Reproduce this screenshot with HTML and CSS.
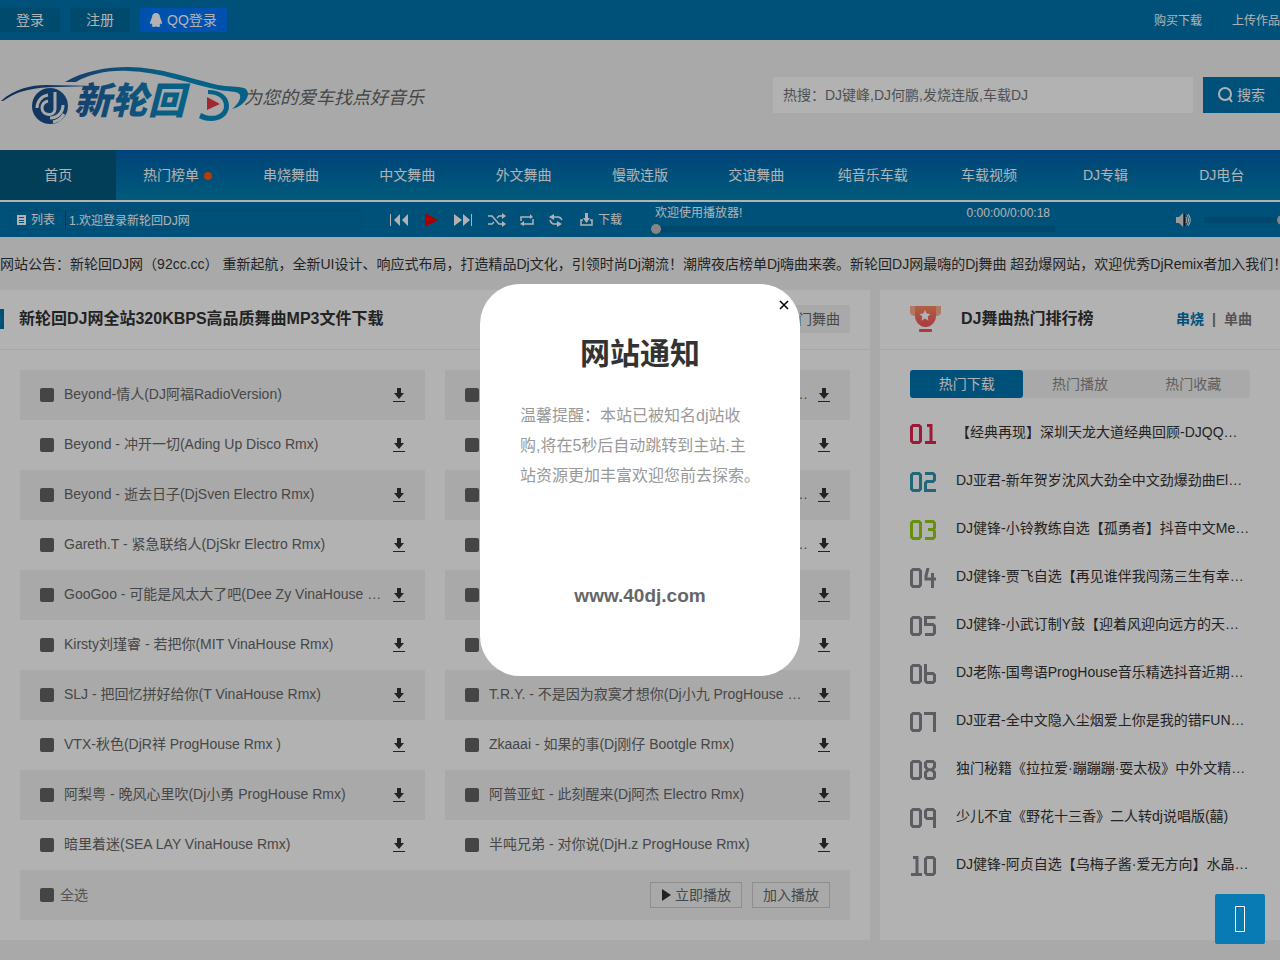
FILE: index.html
```html
<!DOCTYPE html>
<html lang="zh-CN">
<head>
<meta charset="utf-8">
<meta name="viewport" content="width=device-width, initial-scale=1">
<title>新轮回DJ网</title>
<link rel="stylesheet" href="styles.css">
</head>
<body>
<svg class="sprite" aria-hidden="true">
  <symbol id="d0" viewBox="0 0 12 20"><path d="M3 1.500h6L10.500 3v14L9 18.500H3L1.500 17V3z"/></symbol>
  <symbol id="d1" viewBox="0 0 12 20"><path d="M3 1.500h4v17M1 18.500h11"/></symbol>
  <symbol id="d2" viewBox="0 0 12 20"><path d="M1 1.500h8L10.500 3v5L9 9.500H3L1.500 11v7.500H12"/></symbol>
  <symbol id="d3" viewBox="0 0 12 20"><path d="M1 1.500h8L10.500 3v5L9 9.500H4M9 9.500l1.500 2V17L9 18.500H1"/></symbol>
  <symbol id="d4" viewBox="0 0 12 20"><path d="M4 0L2 8v3h10M8.500 5v15"/></symbol>
  <symbol id="d5" viewBox="0 0 12 20"><path d="M11.500 1.500h-10v7H9l1.500 1.500v7L9 18.500H1"/></symbol>
  <symbol id="d6" viewBox="0 0 12 20"><path d="M1.500 0v17L3 18.500h6l1.500-1.500v-6L9 9.500H2"/></symbol>
  <symbol id="d7" viewBox="0 0 12 20"><path d="M0 1.500h10.500V20"/></symbol>
  <symbol id="d8" viewBox="0 0 12 20"><path d="M3 1.500h6L10.500 3v4L8 9.700l2.500 2.800V17L9 18.500H3L1.500 17v-4.500L4 9.700 1.500 7V3zM4 9.700h4"/></symbol>
  <symbol id="d9" viewBox="0 0 12 20"><path d="M10.500 20V3L9 1.500H3L1.500 3v6L3 10.500h7"/></symbol>
  <symbol id="down" viewBox="0 0 12 14"><path d="M4 0h4v5h3L6 11 1 5h3zM0 13h12v1H0z"/></symbol>
</svg>

<div class="topbar">
  <div class="account">
    <button class="top-btn">登录</button>
    <button class="top-btn">注册</button>
    <button class="top-btn qq"><svg width="12" height="14" viewBox="0 0 12 14"><path fill="#fff" d="M6 0C3.500 0 2 1.800 2 4.300L.4 8.200C-.1 9.800 0 11 .4 11.200c.4 0 .8-.5 1.200-1 .1.800.5 1.400 1 1.900-.6.300-.9.700-.9 1 0 .700 1.200.9 2.300.8.800-.1 1.500-.3 2-.6.500.3 1.200.5 2 .6 1.100.1 2.300-.1 2.300-.8 0-.3-.3-.7-.9-1 .5-.5.900-1.100 1-1.900.4.500.8 1 1.200 1 .4-.2.500-1.400 0-3L10 4.300C10 1.800 8.500 0 6 0z"/></svg>QQ登录</button>
  </div>
  <div class="top-links"><a href="#">购买下载</a><a href="#">上传作品</a></div>
</div>

<header class="header">
  <a class="brand" href="#" aria-label="新轮回">
    <svg width="250" height="60" viewBox="0 0 250 60">
      <defs><linearGradient id="brandFill" gradientUnits="userSpaceOnUse" x1="0" y1="0" x2="250" y2="0"><stop offset="0" stop-color="#173f77"/><stop offset=".35" stop-color="#1f62a0"/><stop offset=".7" stop-color="#0a8cc0"/><stop offset="1" stop-color="#0a8cc0"/></linearGradient></defs>
      <g fill="url(#brandFill)">
        <path d="M65 17C83 6 107 2 128 2c32 0 64 12 90 18 10 2 20 1 26 3 9 4 2 18-12 21 6-5 9-10 8-14-2-4-8-3-21-5C190 19 160 7 128 6 106 5 88 10 76 17z"/>
        <path d="M1 36C14 24 31 20 46 20l54 1C70 22 44 21 28 25 17 27 9 32 3 36z"/>
        <circle cx="50" cy="41" r="18"/>
        <path d="M208 25c14 0 21 7 21 16 0 10-9 15-18 15-5 0-9-1-12-3l2-5c11 6 23 2 23-7 0-8-7-12-16-12z"/>
        <text class="brand-name" x="74" y="49">新轮回</text>
      </g>
      <g fill="none" stroke="#f3f3f3" stroke-width="3"><path d="M55 27v17c0 8-13 7-13-1 0-4 2-6 6-7M48 30c-7 1-11 7-11 13M50 53c8 0 13-6 13-13M53 57c5-1 9-4 11-8"/></g>
      <path d="M207 32l13 7-13 6z" fill="#e63a45"/>
    </svg>
    <span class="slogan">为您的爱车找点好音乐</span>
  </a>
  <form class="search">
    <input type="text" aria-label="搜索舞曲" placeholder="热搜：DJ键峰,DJ何鹏,发烧连版,车载DJ">
    <button type="button"><svg width="15" height="16" viewBox="0 0 15 16" fill="none" stroke="#fff" stroke-width="2"><circle cx="7" cy="7" r="6"/><path d="M11 11l3 4"/></svg>搜索</button>
  </form>
</header>

<nav class="nav">
  <a class="active" href="#">首页</a><a href="#">热门榜单<i class="dot"></i></a><a href="#">串烧舞曲</a><a href="#">中文舞曲</a><a href="#">外文舞曲</a><a href="#">慢歌连版</a><a href="#">交谊舞曲</a><a href="#">纯音乐车载</a><a href="#">车载视频</a><a href="#">DJ专辑</a><a href="#">DJ电台</a>
</nav>

<section class="player">
  <div class="playlist">
    <button><svg width="9" height="10" viewBox="0 0 9 10"><path fill="#fff" d="M0 0h9v10H0z"/><path d="M2 2.500h5M2 5.500h5M2 7.500h5" stroke="#0075ae"/></svg>列表</button>
    <span>1.欢迎登录新轮回DJ网</span>
  </div>
  <div class="controls">
    <button aria-label="上一首"><svg width="18" height="12" viewBox="0 0 18 12"><path d="M0 0h1v12H0zM10 0v12L4 6zM18 0v12l-6-6z"/></svg></button>
    <button aria-label="播放"><svg width="14" height="14" viewBox="0 0 14 14"><path d="M1 0l13 7-13 7z" fill="#f00000"/></svg></button>
    <button aria-label="下一首"><svg width="18" height="12" viewBox="0 0 18 12"><path d="M17 0h1v12h-1zM8 6l-8 6V0zM16 6l-7 6V0z"/></svg></button>
    <div class="modes">
      <button aria-label="随机播放"><svg width="18" height="14" viewBox="0 0 18 14"><path class="line" d="M0 3h4l7 8h4M0 11h4l2-2M9 5l2-2h4"/><path d="M14 0l4 3-4 3zM14 8l4 3-4 3z"/></svg></button>
      <button aria-label="列表循环"><svg width="14" height="12" viewBox="0 0 14 12"><path class="line" d="M1 7V3h10M13 5v5H3"/><path d="M10 0l3 3-3 2zM4 7l-4 3 4 2z"/></svg></button>
      <button aria-label="单曲循环"><svg width="16" height="14" viewBox="0 0 16 14"><path class="line" d="M3 4h7c2 0 3 1 4 3M2 7c1 3 2 4 4 4h6"/><path d="M6 1L1 4l5 3zM9 8l5 3-5 3z"/></svg></button>
    </div>
    <button class="download"><svg width="13" height="13" viewBox="0 0 13 13"><path class="line" d="M3 7H1v5h11V7h-2"/><path d="M5 0h3v5h2l-3.500 5L3 5h2z"/></svg>下载</button>
  </div>
  <div class="progress">
    <div class="progress-text"><span>欢迎使用播放器!</span><span>0:00:00/0:00:18</span></div>
    <input type="range" aria-label="播放进度" min="0" max="100" value="0">
  </div>
  <div class="volume">
    <svg width="15" height="14" viewBox="0 0 15 14"><path fill="#ddd" d="M0 4h3l4-4v14l-4-4H0z"/><path stroke="#222" d="M8.500 1v12"/><path class="line thin" d="M10 4c1 2 1 4 0 6M11 2c2 3 2 7 0 10M12 1c3 4 3 8 0 12"/></svg>
    <input type="range" aria-label="音量" min="0" max="100" value="100">
  </div>
</section>

<p class="notice">网站公告：新轮回DJ网（92cc.cc） 重新起航，全新UI设计、响应式布局，打造精品Dj文化，引领时尚Dj潮流！潮牌夜店榜单Dj嗨曲来袭。新轮回DJ网最嗨的Dj舞曲 超劲爆网站，欢迎优秀DjRemix者加入我们！</p>

<main class="main">
  <section class="card">
    <div class="card-head songs-head"><h2>新轮回DJ网全站320KBPS高品质舞曲MP3文件下载</h2><a class="tag" href="#">热门舞曲</a></div>
    <div class="card-body">
      <ul class="songs">
        <li><label><input type="checkbox"><span>Beyond-情人(DJ阿福RadioVersion)</span></label><button class="get" aria-label="下载"><svg><use href="#down"/></svg></button></li>
        <li><label><input type="checkbox"><span class="tail">…</span></label><button class="get" aria-label="下载"><svg><use href="#down"/></svg></button></li>
        <li><label><input type="checkbox"><span>Beyond - 冲开一切(Ading Up Disco Rmx)</span></label><button class="get" aria-label="下载"><svg><use href="#down"/></svg></button></li>
        <li><label><input type="checkbox"></label><button class="get" aria-label="下载"><svg><use href="#down"/></svg></button></li>
        <li><label><input type="checkbox"><span>Beyond - 逝去日子(DjSven Electro Rmx)</span></label><button class="get" aria-label="下载"><svg><use href="#down"/></svg></button></li>
        <li><label><input type="checkbox"><span class="tail">…</span></label><button class="get" aria-label="下载"><svg><use href="#down"/></svg></button></li>
        <li><label><input type="checkbox"><span>Gareth.T - 紧急联络人(DjSkr Electro Rmx)</span></label><button class="get" aria-label="下载"><svg><use href="#down"/></svg></button></li>
        <li><label><input type="checkbox"><span class="tail">…</span></label><button class="get" aria-label="下载"><svg><use href="#down"/></svg></button></li>
        <li><label><input type="checkbox"><span>GooGoo - 可能是风太大了吧(Dee Zy VinaHouse …</span></label><button class="get" aria-label="下载"><svg><use href="#down"/></svg></button></li>
        <li><label><input type="checkbox"></label><button class="get" aria-label="下载"><svg><use href="#down"/></svg></button></li>
        <li><label><input type="checkbox"><span>Kirsty刘瑾睿 - 若把你(MIT VinaHouse Rmx)</span></label><button class="get" aria-label="下载"><svg><use href="#down"/></svg></button></li>
        <li><label><input type="checkbox"></label><button class="get" aria-label="下载"><svg><use href="#down"/></svg></button></li>
        <li><label><input type="checkbox"><span>SLJ - 把回忆拼好给你(T VinaHouse Rmx)</span></label><button class="get" aria-label="下载"><svg><use href="#down"/></svg></button></li>
        <li><label><input type="checkbox"><span>T.R.Y. - 不是因为寂寞才想你(Dj小九 ProgHouse …</span></label><button class="get" aria-label="下载"><svg><use href="#down"/></svg></button></li>
        <li><label><input type="checkbox"><span>VTX-秋色(DjR祥 ProgHouse Rmx )</span></label><button class="get" aria-label="下载"><svg><use href="#down"/></svg></button></li>
        <li><label><input type="checkbox"><span>Zkaaai - 如果的事(Dj刚仔 Bootgle Rmx)</span></label><button class="get" aria-label="下载"><svg><use href="#down"/></svg></button></li>
        <li><label><input type="checkbox"><span>阿梨粤 - 晚风心里吹(Dj小勇 ProgHouse Rmx)</span></label><button class="get" aria-label="下载"><svg><use href="#down"/></svg></button></li>
        <li><label><input type="checkbox"><span>阿普亚虹 - 此刻醒来(Dj阿杰 Electro Rmx)</span></label><button class="get" aria-label="下载"><svg><use href="#down"/></svg></button></li>
        <li><label><input type="checkbox"><span>暗里着迷(SEA LAY VinaHouse Rmx)</span></label><button class="get" aria-label="下载"><svg><use href="#down"/></svg></button></li>
        <li><label><input type="checkbox"><span>半吨兄弟 - 对你说(DjH.z ProgHouse Rmx)</span></label><button class="get" aria-label="下载"><svg><use href="#down"/></svg></button></li>
      </ul>
      <div class="batch">
        <label><input type="checkbox"><span>全选</span></label>
        <div class="batch-actions"><button><svg width="10" height="12" viewBox="0 0 10 12"><path d="M1 0l9 6-9 6z" fill="#333"/></svg>立即播放</button><button>加入播放</button></div>
      </div>
    </div>
  </section>

  <section class="card chart">
    <div class="card-head">
      <svg width="31" height="27" viewBox="0 0 31 27">
        <defs><linearGradient id="cup" x1="0" y1="0" x2="0" y2="1"><stop offset="0" stop-color="#ff8a62"/><stop offset="1" stop-color="#f4525f"/></linearGradient></defs>
        <path d="M0 0h31v6c0 3-3 4-5 4H5C3 10 0 9 0 6z" fill="#ffad8c"/><path d="M5 0h21v10c0 6-5 11-10.500 11S5 16 5 10z" fill="url(#cup)"/><rect x="9" y="23" width="13" height="3" rx="1" fill="#f4525f"/>
        <path d="M15 4l1.700 3.400 3.800.6-2.800 2.600.7 3.800L15 12.600l-3.400 1.800.7-3.800L9.500 8l3.800-.6z" fill="#fff"/>
      </svg>
      <h2>DJ舞曲热门排行榜</h2>
      <div class="switch"><a class="on" href="#">串烧</a><span>|</span><a href="#">单曲</a></div>
    </div>
    <div class="card-body">
      <div class="tabs"><button class="on">热门下载</button><button>热门播放</button><button>热门收藏</button></div>
      <ol class="ranks">
        <li><span class="num red" role="img" aria-label="01"><svg><use href="#d0"/></svg><svg><use href="#d1"/></svg></span><a href="#">【经典再现】深圳天龙大道经典回顾-DJQQ…</a></li>
        <li><span class="num teal" role="img" aria-label="02"><svg><use href="#d0"/></svg><svg><use href="#d2"/></svg></span><a href="#">DJ亚君-新年贺岁沈风大劲全中文劲爆劲曲El…</a></li>
        <li><span class="num green" role="img" aria-label="03"><svg><use href="#d0"/></svg><svg><use href="#d3"/></svg></span><a href="#">DJ健锋-小铃教练自选【孤勇者】抖音中文Me…</a></li>
        <li><span class="num" role="img" aria-label="04"><svg><use href="#d0"/></svg><svg><use href="#d4"/></svg></span><a href="#">DJ健锋-贾飞自选【再见谁伴我闯荡三生有幸…</a></li>
        <li><span class="num" role="img" aria-label="05"><svg><use href="#d0"/></svg><svg><use href="#d5"/></svg></span><a href="#">DJ健锋-小武订制Y鼓【迎着风迎向远方的天…</a></li>
        <li><span class="num" role="img" aria-label="06"><svg><use href="#d0"/></svg><svg><use href="#d6"/></svg></span><a href="#">DJ老陈-国粤语ProgHouse音乐精选抖音近期…</a></li>
        <li><span class="num" role="img" aria-label="07"><svg><use href="#d0"/></svg><svg><use href="#d7"/></svg></span><a href="#">DJ亚君-全中文隐入尘烟爱上你是我的错FUN…</a></li>
        <li><span class="num" role="img" aria-label="08"><svg><use href="#d0"/></svg><svg><use href="#d8"/></svg></span><a href="#">独门秘籍《拉拉爱·蹦蹦蹦·耍太极》中外文精…</a></li>
        <li><span class="num" role="img" aria-label="09"><svg><use href="#d0"/></svg><svg><use href="#d9"/></svg></span><a href="#">少儿不宜《野花十三香》二人转dj说唱版(囍)</a></li>
        <li><span class="num" role="img" aria-label="10"><svg><use href="#d1"/></svg><svg><use href="#d0"/></svg></span><a href="#">DJ健锋-阿贞自选【乌梅子酱·爱无方向】水晶…</a></li>
      </ol>
    </div>
  </section>
</main>

<div class="mask">
  <div class="dialog" role="dialog" aria-labelledby="dialog-title">
    <button class="close" aria-label="关闭"><svg width="10" height="10" viewBox="0 0 10 10"><path d="M1 1l8 8M9 1L1 9" stroke="#000" stroke-width="1.500"/></svg></button>
    <h1 id="dialog-title">网站通知</h1>
    <p>温馨提醒：本站已被知名dj站收购,将在5秒后自动跳转到主站.主站资源更加丰富欢迎您前去探索。</p>
    <a href="#">www.40dj.com</a>
  </div>
</div>
<button class="to-top" aria-label="返回顶部"><svg width="12" height="28" viewBox="0 0 12 28"><path d="M1.500 1.500h9v25h-9z" fill="none" stroke="#fff"/></svg></button>
</body>
</html>
```
FILE: styles.css
```css
* { box-sizing: border-box; }
body { margin: 0; background: #f3f3f3; color: #333; font: 14px/20px "Liberation Sans", "Noto Sans CJK SC", sans-serif; overflow-x: hidden; }
a { color: inherit; text-decoration: none; }
button { margin: 0; padding: 0; border: 0; background: none; color: inherit; font: inherit; cursor: pointer; }
h1, h2, p, ul, ol { margin: 0; padding: 0; }
ul, ol { list-style: none; }
svg { flex: none; display: block; }
.sprite { position: absolute; width: 0; height: 0; }

.topbar { display: flex; align-items: center; justify-content: space-between; height: 40px; background: #0075ae; color: #fff; }
.account { display: flex; gap: 10px; }
.top-btn { display: flex; align-items: center; gap: 5px; height: 24px; padding: 0 16px; background: #006b9d; }
.top-btn.qq { padding: 0 10px; background: #0075fa; }
.top-links { display: flex; padding-top: 2px; font-size: 12px; }
.top-links a + a { margin-left: 15px; padding-left: 14px; border-left: 1px solid #006fa5; }

.header { display: flex; align-items: center; justify-content: space-between; height: 110px; }
.brand { display: flex; align-items: center; }
.brand svg { overflow: visible; margin-right: -6px; }
.brand-name { font: italic 900 37px "Noto Sans CJK SC", sans-serif; }
.slogan { padding-top: 2px; color: #666; font: italic 18px/30px "Noto Sans CJK SC", sans-serif; }
.search { display: flex; gap: 10px; }
.search input { width: 420px; height: 36px; padding: 0 10px; border: 0; background: #fff; font: inherit; }
.search input::placeholder { color: #757575; }
.search button { display: flex; align-items: center; gap: 4px; padding: 0 15px; background: #0075ae; color: #fff; }

.nav { display: grid; grid-template-columns: repeat(11, 1fr); background: linear-gradient(#0061ae, #0082b0); color: #fff; border-bottom: 2px solid #fff; }
.nav a { display: flex; align-items: center; justify-content: center; height: 50px; }
.nav .active { background: #045a7f; }
.nav .dot { width: 8px; height: 8px; margin: 2px -6px 0 5px; border-radius: 50%; background: #ff5a0a; }

.player { display: flex; align-items: center; height: 35px; padding-left: 10px; background: #0075ae; color: #fff; font-size: 12px; overflow: hidden; }
.playlist { display: flex; width: 352px; height: 20px; border: 1px solid #006da3; }
.playlist button { display: flex; align-items: center; gap: 5px; padding: 0 10px 0 6px; border-right: 1px solid #00476b; }
.playlist span { padding-left: 3px; line-height: 20px; }
.controls { display: flex; align-items: center; gap: 16px; margin-left: 28px; fill: #fff; }
.controls .modes { display: flex; align-items: center; gap: 14px; }
.controls .download { display: flex; align-items: center; gap: 5px; }
.line { fill: none; stroke: #fff; stroke-width: 1.5; }
.thin { stroke-width: 1; }
.progress { width: 404px; margin-left: 29px; }
.progress-text { display: flex; justify-content: space-between; padding: 0 5px 0 4px; line-height: 18px; }
input[type="range"] { display: block; width: 100%; height: 10px; margin: 0; appearance: none; background: none; }
input[type="range"]::-webkit-slider-runnable-track { height: 6px; background: #00699c; }
input[type="range"]::-webkit-slider-thumb { width: 10px; height: 10px; margin-top: -2px; appearance: none; border-radius: 50%; background: #c0c0c0; }
.progress input { height: 14px; }
.volume { flex: 1; display: flex; align-items: center; gap: 13px; margin: 0 -7px 0 121px; }

.notice { height: 53px; line-height: 55px; white-space: nowrap; overflow: hidden; }

.main { display: grid; grid-template-columns: minmax(0, 87fr) minmax(0, 40fr); gap: 10px; padding-bottom: 20px; }
.card { background: #fff; }
.card-head { display: flex; align-items: center; height: 60px; padding-bottom: 1px; border-bottom: 1px solid #eee; }
.card-head h2 { font-size: 16px; line-height: 20px; }
.songs-head { justify-content: space-between; padding-right: 20px; }
.songs-head h2 { padding-left: 15px; border-left: 4px solid #0075ae; }
.tag { padding: 4px 10px; background: #f3f3f3; color: #666; }
.card-body { padding: 20px; }
.songs { display: grid; grid-template-columns: repeat(2, minmax(0, 1fr)); column-gap: 20px; color: #666; }
.songs li { display: flex; align-items: center; justify-content: space-between; gap: 10px; height: 50px; padding: 0 20px; }
.songs li:nth-child(4n+1), .songs li:nth-child(4n+2) { background: #f3f3f3; }
.songs label { display: flex; flex: 1; align-items: center; gap: 10px; min-width: 0; white-space: nowrap; }
.songs label span { padding-bottom: 2px; }
.songs .tail { margin-left: auto; }
.get svg { width: 12px; height: 14px; fill: #333; }
input[type="checkbox"] { flex: none; width: 14px; height: 14px; margin: 0; appearance: none; border-radius: 2px; background: #646464; }
.batch { display: flex; align-items: center; justify-content: space-between; height: 50px; padding: 0 20px; background: #f3f3f3; color: #777; }
.batch label { display: flex; align-items: center; gap: 6px; }
.batch-actions { display: flex; gap: 10px; color: #666; }
.batch-actions button { display: flex; align-items: center; gap: 4px; height: 26px; padding: 0 10px; border: 1px solid #ccc; }

.chart .card-head, .chart .card-body { padding-left: 30px; padding-right: 30px; }
.chart .card-head { padding-right: 28px; }
.chart h2 { margin-left: 20px; }
.switch { display: flex; gap: 8px; margin-left: auto; color: #777; font-weight: bold; }
.switch .on { color: #0075ae; }
.tabs { display: grid; grid-template-columns: repeat(3, 1fr); border-radius: 3px; background: #f3f3f3; color: #888; }
.tabs button { height: 28px; border-radius: 3px; }
.tabs .on { background: #0075ae; color: #fff; }
.ranks { margin-top: 12px; }
.ranks li { display: flex; align-items: center; gap: 20px; height: 48px; white-space: nowrap; }
.ranks a { padding-bottom: 4px; }
.num { display: flex; gap: 2px; color: #85858f; }
.num svg { width: 12px; height: 20px; fill: none; stroke: currentColor; stroke-width: 3; }
.num.red { color: #dc2850; }
.num.teal { color: #2d94ae; }
.num.green { color: #94ce14; }

.mask { position: fixed; inset: 0; display: grid; place-items: center; background: rgba(0, 0, 0, .3); }
.dialog { position: relative; width: 320px; padding: 50px 40px 65px; border-radius: 40px; background: #fff; text-align: center; }
.dialog h1 { font-size: 30px; line-height: 40px; }
.dialog p { margin: 27px 0 89px; color: #999; font-size: 16px; line-height: 30px; text-align: left; }
.dialog a { display: block; color: #666; font-size: 19px; line-height: 31px; font-weight: bold; }
.close { position: absolute; top: 16px; right: 11px; }
.to-top { position: fixed; right: 15px; bottom: 16px; display: grid; place-items: center; width: 50px; height: 50px; border-radius: 2px; background: #087bb5; }
```
